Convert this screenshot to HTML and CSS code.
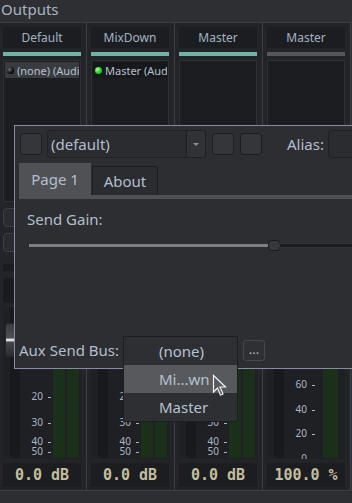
FILE: index.html
```html
<!DOCTYPE html>
<html>
<head>
<meta charset="utf-8">
<link rel="stylesheet" href="styles.css">
</head>
<body>
<div class="app">
  <div class="title">Outputs</div>
  <div class="strips">
    <div class="strip">
      <div class="strip-name">Default</div>
      <div class="strip-bar"></div>
      <div class="port-list">
        <div class="port port-sel"><span class="led led-off"></span><span class="port-name">(none) (Audio Out)</span></div>
      </div>
      <div class="strip-btn"></div>
      <div class="strip-btn"></div>
      <div class="strip-thin"></div>
      <div class="strip-box"></div>
      <div class="meter">
        <div class="groove"><div class="knob"></div></div>
        <div class="scale">
          <span class="tick" style="top:84px">20</span>
          <span class="tick" style="top:110px">30</span>
          <span class="tick" style="top:129px">40</span>
          <span class="tick" style="top:139px">50</span>
        </div>
        <div class="bars"><div class="bar"></div><div class="bar"></div></div>
      </div>
      <div class="readout">0.0 dB</div>
    </div>
    <div class="strip">
      <div class="strip-name">MixDown</div>
      <div class="strip-bar"></div>
      <div class="port-list">
        <div class="port port-dark"><span class="led led-on"></span><span class="port-name">Master (Audio In)</span></div>
      </div>
      <div class="strip-btn"></div>
      <div class="strip-btn"></div>
      <div class="strip-thin"></div>
      <div class="strip-box"></div>
      <div class="meter">
        <div class="groove"><div class="knob"></div></div>
        <div class="scale">
          <span class="tick" style="top:84px">20</span>
          <span class="tick" style="top:110px">30</span>
          <span class="tick" style="top:129px">40</span>
          <span class="tick" style="top:139px">50</span>
        </div>
        <div class="bars"><div class="bar"></div><div class="bar"></div></div>
      </div>
      <div class="readout">0.0 dB</div>
    </div>
    <div class="strip">
      <div class="strip-name">Master</div>
      <div class="strip-bar"></div>
      <div class="port-list"></div>
      <div class="strip-btn"></div>
      <div class="strip-btn"></div>
      <div class="strip-thin"></div>
      <div class="strip-box"></div>
      <div class="meter">
        <div class="groove"><div class="knob"></div></div>
        <div class="scale">
          <span class="tick" style="top:84px">20</span>
          <span class="tick" style="top:110px">30</span>
          <span class="tick" style="top:129px">40</span>
          <span class="tick" style="top:139px">50</span>
        </div>
        <div class="bars"><div class="bar"></div><div class="bar"></div></div>
      </div>
      <div class="readout">0.0 dB</div>
    </div>
    <div class="strip">
      <div class="strip-name">Master</div>
      <div class="strip-bar strip-bar-off"></div>
      <div class="port-list"></div>
      <div class="strip-btn"></div>
      <div class="strip-btn"></div>
      <div class="strip-thin"></div>
      <div class="strip-box"></div>
      <div class="meter">
        <div class="groove"><div class="knob"></div></div>
        <div class="scale">
          <span class="tick" style="top:72px">60</span>
          <span class="tick" style="top:97px">40</span>
          <span class="tick" style="top:121px">20</span>
          <span class="tick" style="top:146px">0</span>
        </div>
        <div class="bars bars-single"><div class="bar bar-wide"></div></div>
      </div>
      <div class="readout">100.0 %</div>
    </div>
  </div>
  <div class="footer"></div>

  <div class="dialog">
    <div class="dlg-top">
      <div class="sq-btn"></div>
      <div class="combo"><span class="combo-text">(default)</span><span class="combo-arrow"><i class="tri"></i></span></div>
      <div class="sq-btn sq-gap"></div>
      <div class="sq-btn sq-gap"></div>
      <span class="alias-label">Alias:</span>
      <div class="alias-field"></div>
    </div>
    <div class="tabs">
      <div class="tab tab-active">Page 1</div>
      <div class="tab tab-idle">About</div>
    </div>
    <div class="pane">
      <div class="pane-label">Send Gain:</div>
      <div class="slider">
        <div class="slider-fill"></div>
        <div class="slider-handle"></div>
        <div class="slider-rest"></div>
      </div>
    </div>
    <div class="aux-row">
      <span class="aux-label">Aux Send Bus:</span>
      <div class="aux-combo"></div>
      <div class="more-btn">...</div>
    </div>
  </div>

  <div class="popup">
    <div class="pop-item">(none)</div>
    <div class="pop-item pop-hi">Mi...wn</div>
    <div class="pop-item">Master</div>
  </div>

  <svg class="cursor" width="16" height="24" viewBox="0 0 16 24">
    <path d="M1.5 1.5 L1.5 18 L5.5 14 L8.5 21 L11 20 L8 13 L13.5 13 Z" fill="none" stroke="#f2f2f2" stroke-width="1.2" stroke-linejoin="miter"/>
  </svg>
</div>
</body>
</html>
```

FILE: styles.css
```css
html, body {
  margin: 0;
  padding: 0;
  width: 352px;
  height: 503px;
  overflow: hidden;
  background: #2e2f33;
  font-family: "Noto Sans", "Open Sans", sans-serif;
}

.app {
  position: relative;
  width: 352px;
  height: 503px;
  overflow: hidden;
}

.title {
  height: 22px;
  box-sizing: border-box;
  padding-left: 1px;
  font-size: 15px;
  line-height: 18px;
  color: #a9b4c2;
}

.strips {
  display: flex;
  margin-left: -1px;
  height: 467px;
  border-top: 1px solid #3b3c41;
  border-bottom: 1px solid #3b3c41;
}

.strip {
  flex: none;
  width: 78px;
  padding: 4px 5px 3px 4px;
  border-right: 1px solid #3e3f44;
  background: #232428;
  display: flex;
  flex-direction: column;
}

.strip-name {
  height: 21px;
  line-height: 21px;
  background: #1c1d20;
  color: #a2b3c6;
  font-size: 12px;
  text-align: center;
}

.strip-bar {
  height: 4px;
  margin-top: 4px;
  background: #6fb4a6;
}

.strip-bar-off {
  background: #555659;
}

.port-list {
  height: 142px;
  margin-top: 4px;
  box-sizing: border-box;
  border: 1px solid #2f3034;
  background: #1c1d20;
}

.port {
  display: flex;
  align-items: center;
  height: 16px;
  margin: 1px;
  overflow: hidden;
  white-space: nowrap;
  font-size: 11px;
  color: #b4c0cf;
}

.port-sel {
  background: #3a3b40;
}

.port-dark {
  background: #17181b;
}

.led {
  flex: none;
  width: 7px;
  height: 7px;
  margin: 0 3px 0 2px;
  border-radius: 50%;
}

.led-off {
  background: radial-gradient(circle at 35% 35%, #6a6b70 0%, #111 55%, #000 100%);
}

.led-on {
  background: radial-gradient(circle at 35% 35%, #b8ffb0 0%, #27e024 45%, #129a10 100%);
}

.port-name {
  overflow: hidden;
}

.strip-btn {
  height: 19px;
  margin-top: 6px;
  box-sizing: border-box;
  border: 1px solid #3e3f44;
  border-radius: 4px;
  background: #2a2b2f;
}

.strip-thin {
  height: 7px;
  margin-top: 12px;
  border-radius: 2px;
  background: #1a1b1e;
}

.strip-box {
  height: 25px;
  margin-top: 7px;
  border-radius: 3px;
  background: #1a1b1e;
}

.meter {
  height: 152px;
  margin-top: 4px;
  display: flex;
  padding-left: 7px;
  background: #1f2024;
}

.groove {
  position: relative;
  flex: none;
  width: 10px;
  height: 151px;
  border-radius: 4px;
  background: #18191c;
}

.knob {
  position: absolute;
  left: -5px;
  top: 16px;
  width: 20px;
  height: 34px;
  box-sizing: border-box;
  border: 1px solid #26272a;
  border-radius: 3px;
  background: linear-gradient(to bottom, #3a3b3f 0%, #505155 44%, #e0e0e0 47%, #e0e0e0 53%, #45464a 56%, #2a2b2e 100%);
}

.scale {
  position: relative;
  flex: none;
  width: 31px;
  height: 152px;
  overflow: hidden;
}

.tick {
  position: absolute;
  right: 0;
  font-size: 10px;
  line-height: 10px;
  color: #a9b6c6;
  white-space: nowrap;
}

.tick::after {
  content: "";
  display: inline-block;
  width: 3px;
  height: 1px;
  margin-left: 5px;
  vertical-align: middle;
  background: currentColor;
}

.bars {
  display: flex;
  gap: 2px;
  margin-left: 2px;
}

.bars-single {
  margin-left: 8px;
}

.bar {
  width: 12px;
  height: 151px;
  background: #1b3019;
}

.bar-wide {
  width: 15px;
}

.readout {
  height: 24px;
  margin-top: 4px;
  background: #1c1d20;
  border-radius: 2px;
  text-align: center;
  font-family: "DejaVu Sans Mono", "Liberation Mono", monospace;
  font-weight: bold;
  font-size: 15px;
  line-height: 24px;
  color: #c2bf9c;
}

.footer {
  height: 12px;
  background: #2d2e32;
}

/* dialog */
.dialog {
  position: absolute;
  left: 14px;
  top: 125px;
  width: 420px;
  height: 244px;
  box-sizing: border-box;
  border: 1px solid #8e89a7;
  background: #2d2e32;
  display: flex;
  flex-direction: column;
  padding-bottom: 7px;
  color: #b3bfce;
  font-size: 15px;
}

.dlg-top {
  display: flex;
  align-items: center;
  height: 28px;
  margin-top: 4px;
  padding-left: 5px;
}

.sq-btn {
  flex: none;
  width: 22px;
  height: 22px;
  box-sizing: border-box;
  border: 1px solid #1d1e21;
  border-radius: 3px;
  background: #35363a;
}

.sq-gap {
  margin-left: 6px;
}

.combo {
  flex: none;
  display: flex;
  width: 159px;
  height: 28px;
  margin-left: 5px;
  box-sizing: border-box;
  border: 1px solid #212226;
  border-radius: 3px;
  background: #2b2c30;
}

.combo-text {
  flex: 1;
  padding-left: 3px;
  line-height: 26px;
}

.combo-arrow {
  flex: none;
  width: 20px;
  margin: -1px -1px -1px 0;
  box-sizing: border-box;
  border: 1px solid #1f2023;
  border-radius: 3px;
  background: #313237;
  display: flex;
  align-items: center;
  justify-content: center;
}

.tri {
  width: 0;
  height: 0;
  border-left: 3px solid transparent;
  border-right: 3px solid transparent;
  border-top: 3px solid #8c8d91;
}

.alias-label {
  margin-left: 25px;
  line-height: 20px;
}

.alias-field {
  flex: none;
  width: 90px;
  height: 28px;
  margin-left: 4px;
  box-sizing: border-box;
  border: 1px solid #1f2023;
  border-radius: 3px;
  background: #2b2c30;
}

.tabs {
  display: flex;
  align-items: flex-end;
  height: 32px;
  margin-top: 5px;
  padding-left: 4px;
}

.tab {
  box-sizing: border-box;
  text-align: center;
}

.tab-active {
  width: 72px;
  height: 32px;
  line-height: 32px;
  background: #505155;
}

.tab-idle {
  width: 66px;
  height: 29px;
  line-height: 29px;
  margin-left: 1px;
  border: 1px solid #1c1d20;
  border-bottom: none;
  border-radius: 3px 3px 0 0;
  background: #2b2c30;
}

.pane {
  flex: 1;
  margin-left: 4px;
  border-top: 4px solid #505155;
  padding: 10px 0 0 8px;
}

.pane-label {
  line-height: 20px;
}

.slider {
  display: flex;
  align-items: center;
  height: 11px;
  margin: 11px 0 0 2px;
}

.slider-fill {
  flex: none;
  width: 239px;
  height: 3px;
  background: #7e7f83;
}

.slider-handle {
  flex: none;
  width: 12px;
  height: 11px;
  box-sizing: border-box;
  border: 1px solid #1b1c1f;
  border-radius: 3px;
  background: #37383c;
}

.slider-rest {
  flex: 1;
  height: 3px;
  background: #1c1d20;
  box-shadow: 0 0 0 1px #303135;
}

.aux-row {
  display: flex;
  align-items: center;
  height: 22px;
  padding-left: 4px;
}

.aux-label {
  flex: none;
  width: 104px;
  line-height: 20px;
}

.aux-combo {
  flex: none;
  width: 115px;
  height: 22px;
}

.more-btn {
  flex: none;
  width: 22px;
  height: 21px;
  margin-left: 5px;
  box-sizing: border-box;
  border: 1px solid #46474c;
  border-radius: 3px;
  background: #2f3034;
  text-align: center;
  font-size: 13px;
  line-height: 17px;
}

/* popup */
.popup {
  position: absolute;
  left: 123px;
  top: 336px;
  width: 115px;
  box-sizing: border-box;
  border: 1px solid #1d1e21;
  background: #2e2f33;
  color: #b6c2d1;
  font-size: 15px;
}

.pop-item {
  height: 28px;
  line-height: 28px;
  padding-left: 35px;
}

.pop-hi {
  background: #58595d;
}

.cursor {
  position: absolute;
  left: 212px;
  top: 374px;
}
```
